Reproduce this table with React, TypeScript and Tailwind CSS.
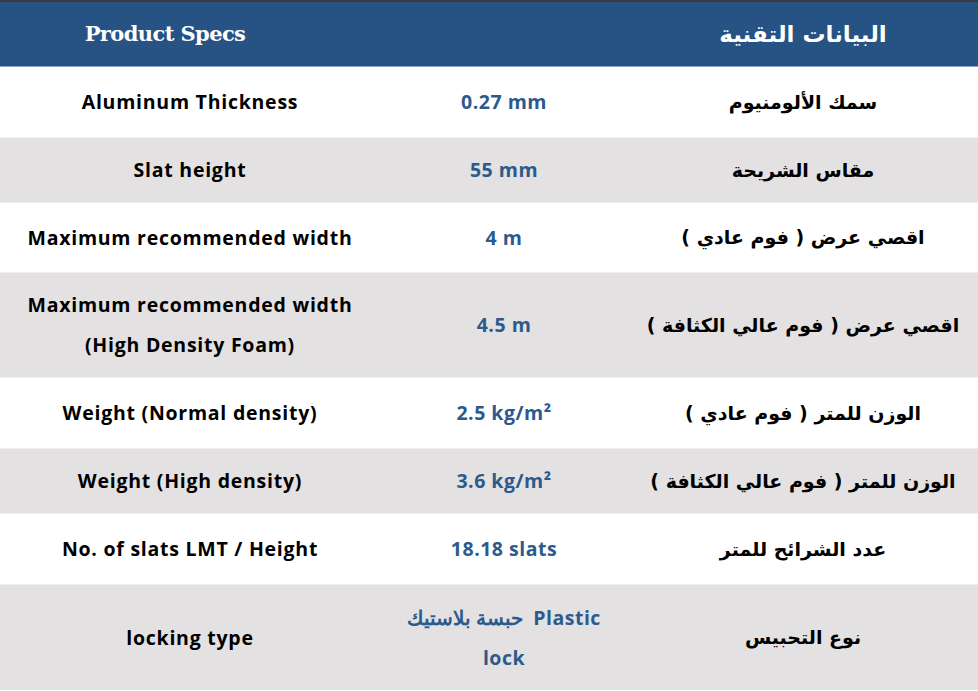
const rows = [
	{ en: ['Aluminum Thickness'], val: ['0.27 mm'], ar: 'سمك الألومنيوم', h: 'h-[70px]', bg: 'bg-white' },
	{ en: ['Slat height'], val: ['55 mm'], ar: 'مقاس الشريحة', h: 'h-[65px]', bg: 'bg-[#e3e1e2]' },
	{ en: ['Maximum recommended width'], val: ['4 m'], ar: 'اقصي عرض ( فوم عادي )', h: 'h-[70px]', bg: 'bg-white' },
	{
		en: ['Maximum recommended width', '(High Density Foam)'],
		val: ['4.5 m'],
		ar: 'اقصي عرض ( فوم عالي الكثافة )',
		h: 'h-[105px]',
		bg: 'bg-[#e3e1e2]',
	},
	{ en: ['Weight (Normal density)'], val: ['2.5 kg/m²'], ar: 'الوزن للمتر ( فوم عادي )', h: 'h-[71px]', bg: 'bg-white' },
	{ en: ['Weight (High density)'], val: ['3.6 kg/m²'], ar: 'الوزن للمتر ( فوم عالي الكثافة )', h: 'h-[65px]', bg: 'bg-[#e3e1e2]' },
	{ en: ['No. of slats LMT / Height'], val: ['18.18 slats'], ar: 'عدد الشرائح للمتر', h: 'h-[71px]', bg: 'bg-white' },
	{ en: ['locking type'], val: ['حبسة بلاستيك  Plastic', 'lock'], ar: 'نوع التحبيس', h: 'h-[106px]', bg: 'bg-[#e3e1e2]' },
];

export default function App() {
	return (
		<div className="w-[978px] h-[691px] overflow-hidden bg-white font-['Open_Sans',sans-serif]">
			{/* header */}
			<div className="h-[67px] border-t-2 border-t-[#3b3b3b] border-b border-b-[#8ea4c2] bg-[#265383] flex items-center">
				<div className="w-[330px] text-center text-white font-bold text-[21px] tracking-[-0.6px] font-['DejaVu_Serif',serif]">
					Product Specs
				</div>
				<div className="flex-1" />
				<div
					dir="rtl"
					className="w-[350px] text-center text-white font-semibold text-[23px] font-['DejaVu_Sans',sans-serif]">
					البيانات التقنية
				</div>
			</div>
			{rows.map((row, i) => (
				<div key={i} className={`flex items-center ${row.h} ${row.bg} ${i > 0 ? 'border-t border-t-[#f0eff0]' : ''}`}>
					<div className="w-[380px] text-center text-black font-bold text-[19.5px] tracking-[0.75px] leading-[40px]">
						{row.en.map((line) => (
							<div key={line}>{line}</div>
						))}
					</div>
					<div className="w-[248px] text-center text-[#2c5a8c] font-bold text-[19.5px] tracking-[0.5px] leading-[40px]">
						{row.val.map((line) => (
							<div key={line} className="whitespace-pre">{line}</div>
						))}
					</div>
					<div
						dir="rtl"
						className="w-[350px] text-center text-black font-semibold text-[19px] font-['DejaVu_Sans',sans-serif]">
						{row.ar}
					</div>
				</div>
			))}
		</div>
	);
}
